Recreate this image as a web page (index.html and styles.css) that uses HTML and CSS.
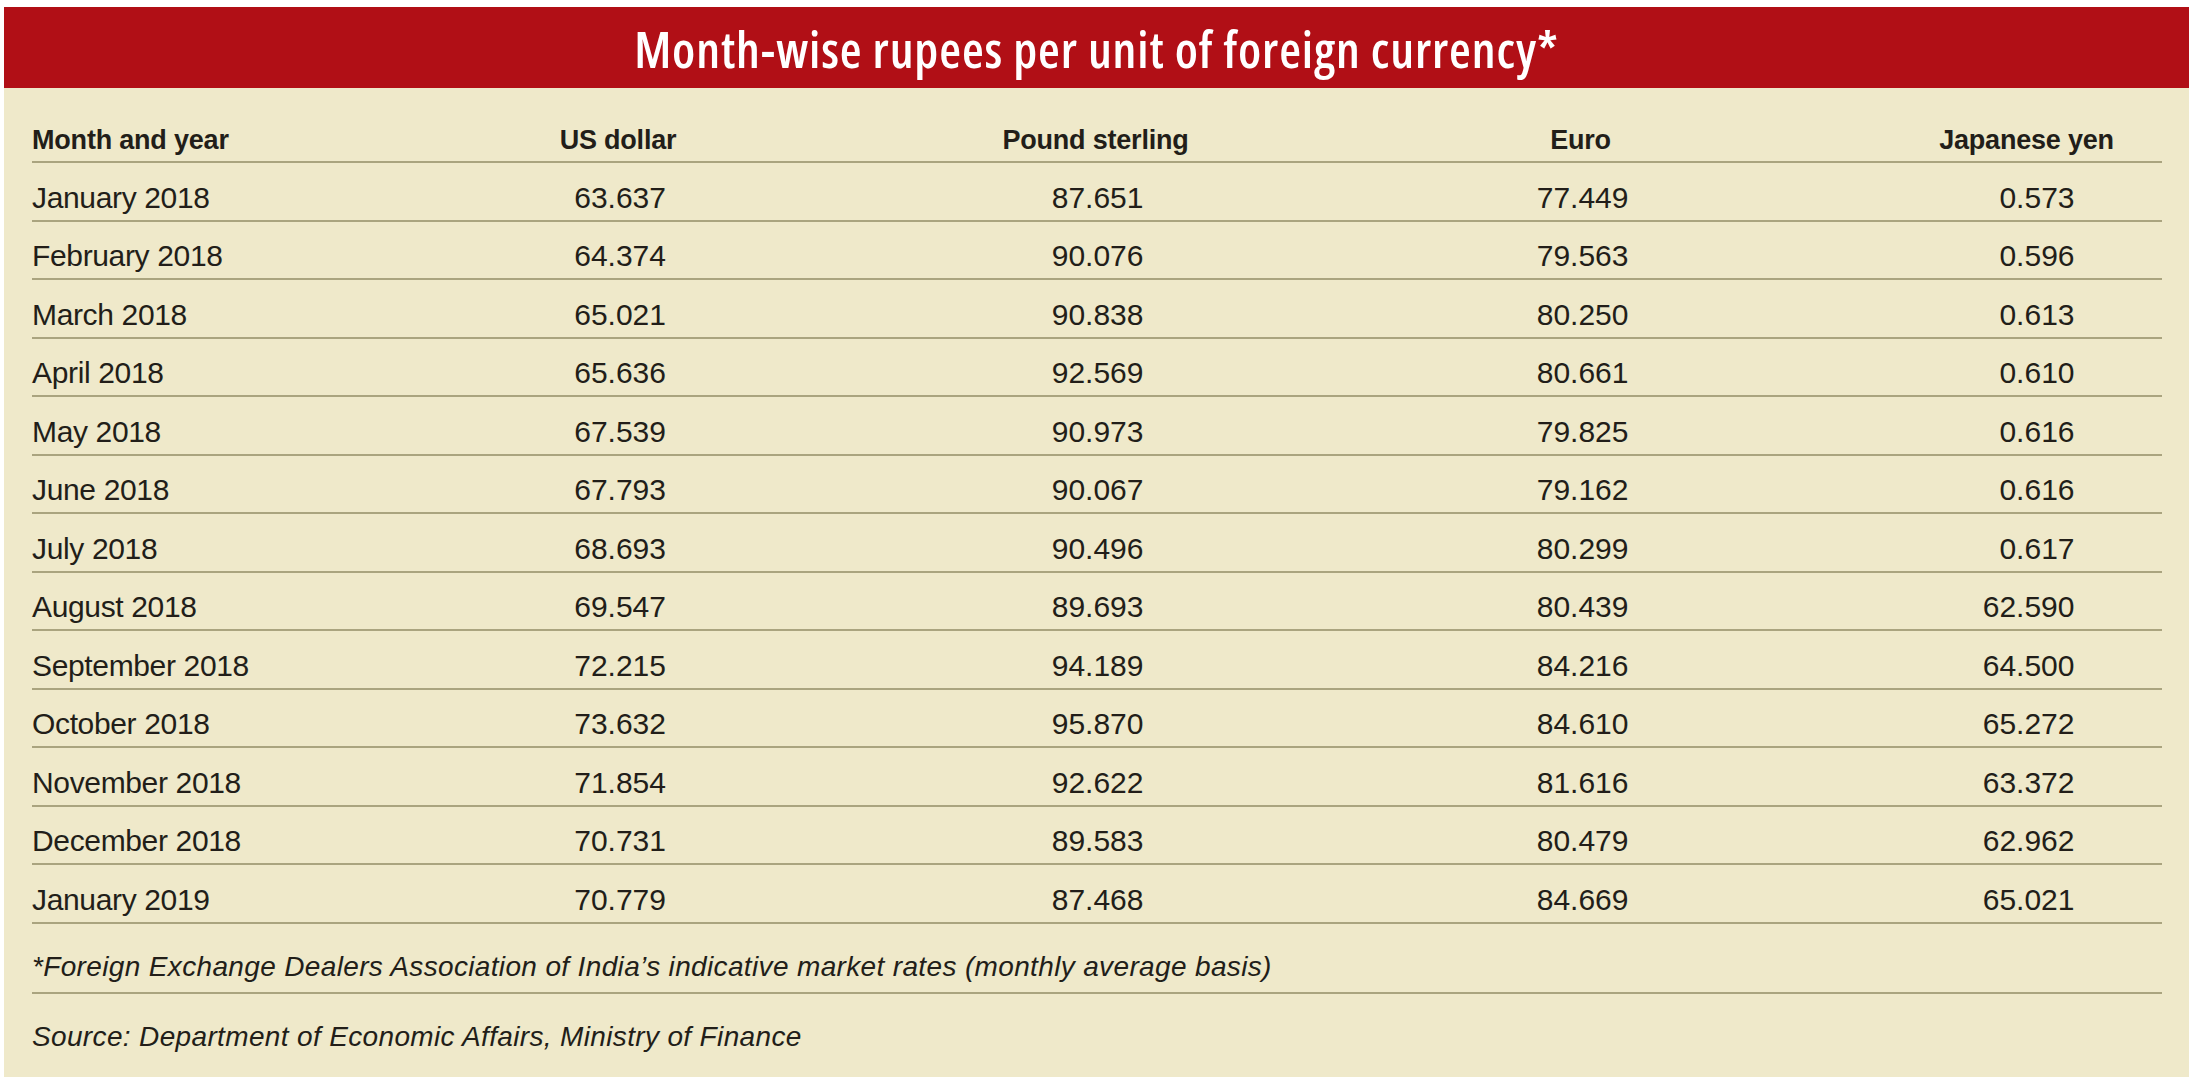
FILE: index.html
```html
<!DOCTYPE html>
<html lang="en">
<head>
<meta charset="utf-8">
<title>Month-wise rupees per unit of foreign currency</title>
<link rel="stylesheet" href="styles.css">
</head>
<body>
<div class="card">
  <h1 class="title"><span class="title-text">Month-wise rupees per unit of foreign currency*</span></h1>
  <div class="table">
    <div class="row head">
      <div class="month">Month and year</div>
      <div class="cell">US dollar</div>
      <div class="cell">Pound sterling</div>
      <div class="cell">Euro</div>
      <div class="cell">Japanese yen</div>
    </div>
    <div class="row"><div class="month">January 2018</div><div class="cell">63.637</div><div class="cell">87.651</div><div class="cell">77.449</div><div class="cell">0.573</div></div>
    <div class="row"><div class="month">February 2018</div><div class="cell">64.374</div><div class="cell">90.076</div><div class="cell">79.563</div><div class="cell">0.596</div></div>
    <div class="row"><div class="month">March 2018</div><div class="cell">65.021</div><div class="cell">90.838</div><div class="cell">80.250</div><div class="cell">0.613</div></div>
    <div class="row"><div class="month">April 2018</div><div class="cell">65.636</div><div class="cell">92.569</div><div class="cell">80.661</div><div class="cell">0.610</div></div>
    <div class="row"><div class="month">May 2018</div><div class="cell">67.539</div><div class="cell">90.973</div><div class="cell">79.825</div><div class="cell">0.616</div></div>
    <div class="row"><div class="month">June 2018</div><div class="cell">67.793</div><div class="cell">90.067</div><div class="cell">79.162</div><div class="cell">0.616</div></div>
    <div class="row"><div class="month">July 2018</div><div class="cell">68.693</div><div class="cell">90.496</div><div class="cell">80.299</div><div class="cell">0.617</div></div>
    <div class="row"><div class="month">August 2018</div><div class="cell">69.547</div><div class="cell">89.693</div><div class="cell">80.439</div><div class="cell">62.590</div></div>
    <div class="row"><div class="month">September 2018</div><div class="cell">72.215</div><div class="cell">94.189</div><div class="cell">84.216</div><div class="cell">64.500</div></div>
    <div class="row"><div class="month">October 2018</div><div class="cell">73.632</div><div class="cell">95.870</div><div class="cell">84.610</div><div class="cell">65.272</div></div>
    <div class="row"><div class="month">November 2018</div><div class="cell">71.854</div><div class="cell">92.622</div><div class="cell">81.616</div><div class="cell">63.372</div></div>
    <div class="row"><div class="month">December 2018</div><div class="cell">70.731</div><div class="cell">89.583</div><div class="cell">80.479</div><div class="cell">62.962</div></div>
    <div class="row"><div class="month">January 2019</div><div class="cell">70.779</div><div class="cell">87.468</div><div class="cell">84.669</div><div class="cell">65.021</div></div>
    <p class="note">*Foreign Exchange Dealers Association of India’s indicative market rates (monthly average basis)</p>
    <p class="source">Source: Department of Economic Affairs, Ministry of Finance</p>
  </div>
</div>
</body>
</html>
```

FILE: styles.css
```css
html, body {
  margin: 0;
  padding: 0;
  background: #ffffff;
}

.card {
  margin: 7px 0 0 4px;
  width: 2185px;
  height: 1070px;
  background: #efe9ca;
  color: #221e19;
  font-family: "Liberation Sans", Arial, sans-serif;
  display: flex;
  flex-direction: column;
}

.title {
  margin: 0;
  height: 81px;
  box-sizing: border-box;
  padding-top: 3px;
  line-height: 78px;
  background: #b10f16;
  color: #ffffff;
  text-align: center;
  font-family: "Open Sans", "Liberation Sans", sans-serif;
  font-stretch: 75%;
  font-weight: 600;
  font-size: 50px;
  letter-spacing: 0.9px;
}

.title-text {
  display: inline-block;
}

.table {
  padding: 0 27px 0 28px;
  flex: 1;
  display: flex;
  flex-direction: column;
}

.row {
  display: grid;
  grid-template-columns: 486px 477.5px 485px 446px 1fr;
  align-items: end;
  box-sizing: border-box;
  height: 58.5px;
  padding-bottom: 5px;
  border-bottom: 2px solid #aaa47f;
  font-size: 30px;
  line-height: 34px;
}

.row .month {
  letter-spacing: -0.35px;
}

.row .cell {
  width: 200px;
  box-sizing: border-box;
  text-align: right;
  padding-right: 52px;
}

.row.head {
  height: 75px;
  padding-bottom: 6px;
  font-size: 27px;
  line-height: 30px;
  font-weight: 700;
}

.row.head .month,
.row.head .cell {
  letter-spacing: -0.2px;
}

.row.head .cell {
  text-align: center;
  padding-right: 0;
}

.note,
.source {
  margin: 0;
  font-style: italic;
  font-size: 28px;
  line-height: 32px;
  letter-spacing: 0.35px;
  display: flex;
  align-items: flex-end;
  box-sizing: border-box;
}

.note {
  height: 70.5px;
  padding-bottom: 9px;
  border-bottom: 2px solid #aaa47f;
}

.source {
  flex: 1;
  padding-bottom: 24px;
}
```
